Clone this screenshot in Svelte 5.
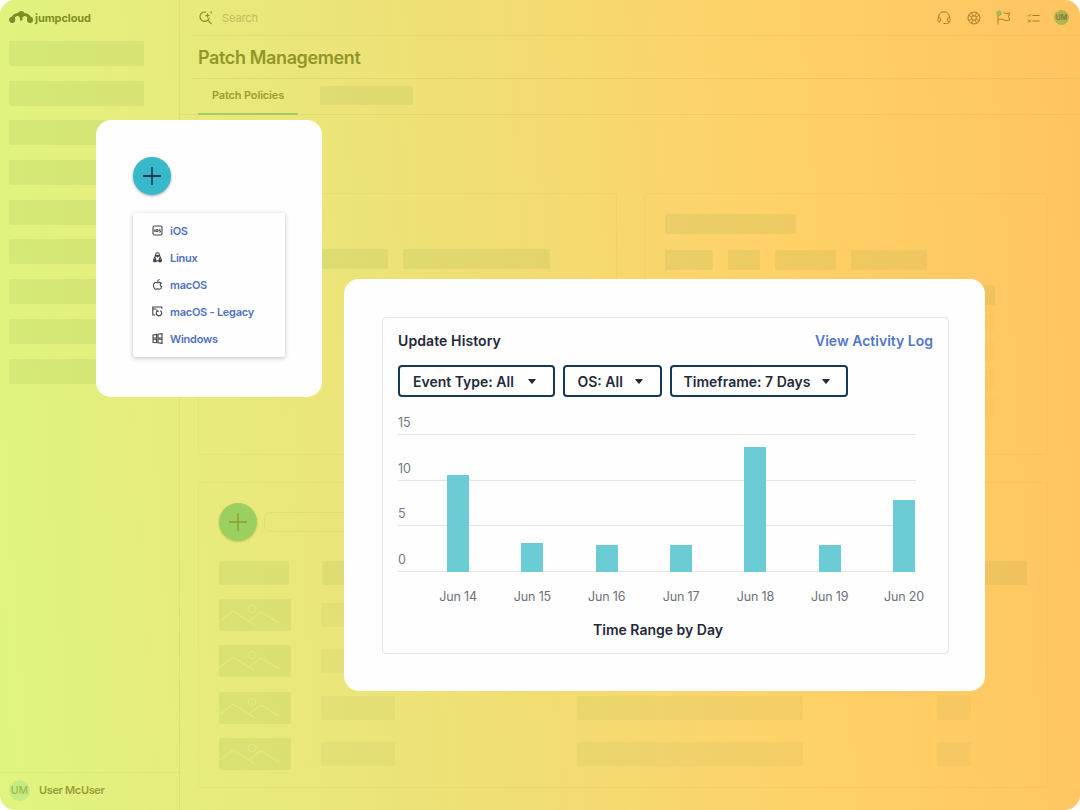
<script lang="ts">
	interface Bar {
		label: string;
		value: number;
	}

	const UNIT = 9.14;

	const bars: Bar[] = [
		{ label: 'Jun 14', value: 10.6 },
		{ label: 'Jun 15', value: 3.2 },
		{ label: 'Jun 16', value: 3 },
		{ label: 'Jun 17', value: 3 },
		{ label: 'Jun 18', value: 13.65 },
		{ label: 'Jun 19', value: 3 },
		{ label: 'Jun 20', value: 7.85 }
	];

	const ticks = [15, 10, 5, 0];
	const filters = [
		{ text: 'Event Type: All', size: 'wide' },
		{ text: 'OS: All', size: 'small' },
		{ text: 'Timeframe: 7 Days', size: 'large' }
	];
	const systems = ['iOS', 'Linux', 'macOS', 'macOS - Legacy', 'Windows'];
	const navItems = Array(9).fill(0);
	const rows = Array(4).fill(0);
	const updates = Array(4).fill(0);
</script>

{#snippet plus()}
	<svg width="18" height="18" viewBox="0 0 18 18" fill="none" stroke="currentColor" stroke-width="1.3">
		<path d="M9 0v18M0 9h18" />
	</svg>
{/snippet}

<div class="app">
	<aside class="sidebar">
		<div class="logo">
			<svg width="25" height="13" viewBox="0 0 25 13" fill="currentColor">
				<circle cx="3.2" cy="8.8" r="3.1" />
				<circle cx="21" cy="8.8" r="3.1" />
				<circle cx="12.200" cy="3.200" r="3.200" />
				<path d="M10.900 4h2.500v5.500h-2.500z" />
				<path d="M3 8.500C4.500 4.800 6.500 3.500 9 3.500h6.500c2.500 0 4.500 1.500 5.500 5" fill="none" stroke="currentColor" stroke-width="3.200" />
			</svg>
			<span>jumpcloud</span>
		</div>
		<nav>
			{#each navItems as _}
				<div class="block"></div>
			{/each}
		</nav>
		<footer>
			<span class="user-badge">UM</span>
			<span class="user-name">User McUser</span>
		</footer>
	</aside>

	<main>
		<header class="topbar">
			<svg width="14" height="14" viewBox="0 0 14 14" fill="none" stroke="currentColor" stroke-width="1.2">
				<path d="M7 1.200A4.700 4.700 0 1 0 10.300 6.500M9 9.300l3.700 3.700" />
				<path d="M8.500 1.700L9.300 3.700l2 .8-2 .8-.8 2-.8-2-2-.8 2-.8z" fill="currentColor" stroke="none" />
				<circle cx="12.300" cy="1.400" r=".9" fill="currentColor" stroke="none" />
			</svg>
			<span class="search-text">Search</span>
			<div class="tools">
				<svg width="14" height="14" viewBox="0 0 14 14" fill="none" stroke="currentColor" stroke-width="1">
					<path d="M1.500 7V6a5.500 5.200 0 0 1 11 0v1M12.500 10c0 1.500-1 2.300-3 2.500M6.500 12.500h2.500" />
					<rect x="1" y="6.500" width="2.500" height="4.500" rx="1.200" />
					<rect x="10.500" y="6.500" width="2.500" height="4.500" rx="1.200" />
				</svg>
				<svg width="14" height="14" viewBox="0 0 14 14" fill="none" stroke="currentColor" stroke-width="1">
					<circle cx="7" cy="7" r="6" />
					<circle cx="7" cy="7" r="2.300" />
					<path d="M4.300 1.700L6 4.900M9.700 1.700L8 4.900M4.300 12.300L6 9.100M9.700 12.300L8 9.100M1.700 4.300L4.900 6M1.700 9.700L4.900 8M12.300 4.300L9.100 6M12.300 9.700L9.100 8" />
				</svg>
				<svg class="flag" width="16" height="15" viewBox="0 0 16 15" fill="none" stroke="currentColor" stroke-width="1">
					<path d="M2 4v10.500M2 10c3-1.500 4.500-.8 6 0s3 .8 5.800 0L12.500 6.500l1.200-3.600c-2 .8-4 .8-6-.2" />
					<circle class="dot" cx="3" cy="3.200" r="2.700" />
				</svg>
				<svg width="13" height="12" viewBox="0 0 13 12" fill="none" stroke="currentColor" stroke-width="1">
					<path d="M5.500 3.500h7M5.500 9h7M.8 3.200l1.200 1.200L4.200 2M1 7.600l2.800 2.800M3.800 7.600L1 10.400" />
				</svg>
				<span class="avatar">UM</span>
			</div>
		</header>

		<div class="title">Patch Management</div>

		<div class="tabs">
			<div class="tab">Patch Policies</div>
			<div class="block tab-block"></div>
		</div>

		<div class="content">
			<div class="panels">
				<section class="panel first">
					<div class="line">
						<div class="block w-lead"></div>
						<div class="block w-147"></div>
					</div>
				</section>
				<section class="panel second">
					<div class="block w-131"></div>
					<div class="line">
						<div class="block w-48"></div>
						<div class="block w-32"></div>
						<div class="block w-61"></div>
						<div class="block w-76"></div>
					</div>
					<div class="updates">
						<div class="block"></div>
						{#each updates as _}
							<div class="block faint"></div>
						{/each}
					</div>
				</section>
			</div>

			<section class="panel list">
				<div class="list-head">
					<div class="round dim">{@render plus()}</div>
					<div class="search-box"></div>
				</div>
				<div class="row heading">
					<div class="block"></div>
					<div class="block"></div>
					<div class="block"></div>
					<div class="block"></div>
				</div>
				{#each rows as _}
					<div class="row">
						<div class="block thumb">
							<svg width="72" height="32" viewBox="0 0 72 32" fill="none" stroke="currentColor" stroke-width="1.300">
								<path d="M1 22L14 12l22 14M30 22l10-8q2-1 4 0l16 10" />
								<circle cx="33" cy="10" r="3.700" />
							</svg>
						</div>
						<div class="block faint"></div>
						<div class="block faint"></div>
						<div class="block faint"></div>
					</div>
				{/each}
			</section>
		</div>
	</main>

	<div class="float menu-card">
		<div class="round">{@render plus()}</div>
		<ul class="menu">
			{#each systems as name}
				<li>
					<svg width="11" height="11" viewBox="0 0 11 11" fill="none" stroke="currentColor" stroke-width="1.1">
						{#if name === 'iOS'}
							<rect x="1" y="1" width="9" height="9" rx="1.500" />
							<path d="M2.800 4.200v2.800" />
							<circle cx="5" cy="5.600" r="1.100" />
							<path d="M8.500 4.300H7.200v1.300h1.300V7H7" stroke-width=".8" />
						{:else if name === 'Linux'}
							<path d="M3.700 2.500C3.700.2 7.300.2 7.300 2.500c0 2 2.200 3.500 2.200 6L8 10 6.600 8.800H4.400L3 10 1.500 8.500c0-2.500 2.200-4 2.200-6z" />
							<path d="M4 3.500h3L5.500 5zM3.500 6.500L2 9.500h2zM7.500 6.500L9 9.500H7z" fill="currentColor" />
						{:else if name === 'macOS'}
							<path d="M5.500 3.700C3.500 2.700 1.500 3.800 1.500 6.300c0 2.200 1.300 4 2.500 4 .7 0 1-.4 1.700-.4s1 .4 1.700.4c1 0 2-1.300 2.300-2.600-1.900-.9-1.900-2.700-.5-3.500C8 3 6.800 3.200 5.500 3.700zM5.600 2.800C5.600 1.500 6.300.7 7.500.5" />
						{:else if name === 'macOS - Legacy'}
							<path d="M3.300 9H.8V1h9v1.800M.8 3h3.500" />
							<path d="M4.900 5.300V3.400M4.900 5.300h2M5 5.300A2.700 2.700 0 1 0 8.300 4.800" />
						{:else}
							<path d="M1 2l3.600-.5v3.500H1zM6 1.300l4-.6V5H6zM1 6.200h3.600v3.500L1 9.200zM6 6.200h4v4.200l-4-.6z" />
						{/if}
					</svg>
					<span>{name}</span>
				</li>
			{/each}
		</ul>
	</div>

	<div class="float history-card">
		<section class="history">
			<div class="history-head">
				<span class="history-title">Update History</span>
				<span class="link">View Activity Log</span>
			</div>
			<div class="filters">
				{#each filters as f}
					<button class={f.size}>
						{f.text}
						<svg width="8" height="5" viewBox="0 0 8 5" fill="currentColor"><path d="M.7 0h6.600q.8 0 .3.700L4.500 4.600q-.5.500-1 0L.4.700Q-.1 0 .7 0z" /></svg>
					</button>
				{/each}
			</div>
			<div class="chart">
				<div class="grid">
					{#each ticks as tick}
						<div class="tick">{tick}</div>
					{/each}
				</div>
				<div class="bars">
					{#each bars as bar}
						<div class="bar" style="height: {bar.value * UNIT}px"></div>
					{/each}
				</div>
			</div>
			<div class="labels">
				{#each bars as bar}
					<span>{bar.label}</span>
				{/each}
			</div>
			<div class="axis-title">Time Range by Day</div>
		</section>
	</div>
</div>

<style>
	:global(body) {
		background: #fff;
	}

	.app {
		--olive: #92962a;
		--line: rgba(130, 140, 40, 0.1);
		position: relative;
		display: flex;
		width: 1080px;
		height: 810px;
		overflow: hidden;
		border-radius: 15px;
		background: linear-gradient(86deg, #dff580 0%, #e5ee7c 14%, #ebe57a 32%, #f1dd72 48%, #f9d66d 61%, #ffd167 73%, #ffc862 91%, #ffc460 100%);
		font-family: Inter, 'Liberation Sans', sans-serif;
	}

	.app * {
		box-sizing: border-box;
	}

	svg {
		display: block;
		flex: none;
	}

	.block {
		background: rgba(100, 150, 60, 0.1);
		border-radius: 2px;
	}

	.block.faint {
		background: rgba(110, 140, 60, 0.06);
	}

	.sidebar {
		display: flex;
		flex-direction: column;
		width: 180px;
		border-right: 1px solid var(--line);
	}

	.logo {
		display: flex;
		align-items: center;
		gap: 1px;
		height: 36px;
		padding-left: 9px;
		color: #7f8d25;
		font-size: 11px;
		font-weight: 700;
		letter-spacing: -0.1px;
	}

	.logo svg {
		margin-bottom: 2px;
	}

	nav {
		display: flex;
		flex-direction: column;
		gap: 14.7px;
		flex: 1;
		padding: 5px 35px 0 9px;
	}

	nav .block {
		height: 25px;
	}

	footer {
		display: flex;
		align-items: center;
		gap: 9px;
		height: 38px;
		padding: 0 9px 3px;
		border-top: 1px solid var(--line);
	}

	.user-badge {
		width: 21px;
		height: 21px;
		border-radius: 50%;
		background: #c4ec82;
		color: #9dba4c;
		font-size: 10.5px;
		font-weight: 500;
		line-height: 21px;
		text-align: center;
	}

	.user-name {
		color: #989d38;
		font-size: 11px;
		font-weight: 600;
		letter-spacing: -0.35px;
	}

	main {
		flex: 1;
		min-width: 0;
	}

	.topbar {
		display: flex;
		align-items: center;
		height: 36px;
		margin-left: 12px;
		padding: 0 11px 0 7px;
		border-bottom: 1px solid var(--line);
		color: #968c2c;
	}

	.search-text {
		margin-left: 9px;
		color: #bfbc5f;
		font-size: 11px;
		letter-spacing: -0.1px;
	}

	.tools {
		display: flex;
		align-items: center;
		gap: 16px;
		margin-left: auto;
		color: #a97c24;
	}

	.flag {
		margin: -1px -1px 0 -1px;
	}

	.dot {
		fill: #a3b754;
		stroke: none;
	}

	.avatar {
		width: 15px;
		height: 15px;
		margin-left: -2px;
		border-radius: 50%;
		background: #b0b452;
		color: #81792b;
		font-size: 7px;
		font-weight: 600;
		line-height: 15px;
		text-align: center;
	}

	.title {
		height: 43px;
		margin-left: 12px;
		padding-left: 6px;
		border-bottom: 1px solid var(--line);
		color: var(--olive);
		font-size: 18px;
		font-weight: 600;
		letter-spacing: -0.37px;
		line-height: 43px;
	}

	.tabs {
		display: flex;
		align-items: center;
		height: 36px;
		padding-left: 18px;
		border-bottom: 1px solid var(--line);
	}

	.tab {
		width: 100px;
		height: 36px;
		border-bottom: 2px solid #a3cc60;
		color: #9b9d35;
		font-size: 11px;
		font-weight: 600;
		letter-spacing: -0.15px;
		line-height: 33px;
		text-align: center;
	}

	.tab-block {
		width: 93px;
		height: 19px;
		margin: 0 0 2px 22px;
	}

	.content {
		padding: 78px 32px 0 18px;
	}

	.panels {
		display: flex;
		gap: 27px;
		height: 262px;
	}

	.panel {
		border: 1px solid rgba(150, 140, 40, 0.06);
		border-radius: 3px;
	}

	.first {
		width: 419px;
		padding: 55px 20px;
	}

	.second {
		flex: 1;
		padding: 20px 20px 0;
	}

	.line {
		display: flex;
		gap: 15px;
	}

	.line .block {
		height: 20px;
	}

	.second .line {
		margin-top: 16px;
	}

	.w-lead {
		width: 169px;
	}

	.w-147 {
		width: 147px;
	}

	.w-131 {
		width: 131px;
		height: 20px;
	}

	.w-48 {
		width: 48px;
	}

	.w-32 {
		width: 32px;
	}

	.w-61 {
		width: 61px;
	}

	.w-76 {
		width: 76px;
	}

	.updates {
		display: grid;
		gap: 8px;
		width: 330px;
		margin-top: 15px;
	}

	.updates .block {
		height: 20px;
	}

	.updates .faint {
		opacity: 0.4;
	}

	.list {
		height: 306px;
		margin-top: 27px;
		padding: 20px;
	}

	.list-head {
		display: flex;
		align-items: center;
		gap: 7px;
		height: 38px;
	}

	.search-box {
		width: 220px;
		height: 20px;
		border: 1px solid var(--line);
		border-radius: 7px;
	}

	.row {
		display: flex;
		align-items: center;
		height: 32px;
		margin-bottom: 14.4px;
	}

	.row .block {
		height: 24px;
	}

	.row .block:nth-child(1) {
		width: 72px;
		margin-right: 30px;
	}

	.row .block:nth-child(2) {
		width: 74px;
		margin-right: 182px;
	}

	.row .block:nth-child(3) {
		width: 226px;
		margin-right: 134px;
	}

	.row .block:nth-child(4) {
		width: 34px;
	}

	.row .thumb {
		height: 32px;
		color: #e6e780;
	}

	.row.heading {
		height: 24px;
		margin: 20px 0 14px;
	}

	.row.heading .block:nth-child(1) {
		width: 70px;
		margin-right: 33px;
	}

	.row.heading .block:nth-child(4) {
		width: 91px;
	}

	.float {
		position: absolute;
		background: #fefefe;
		border-radius: 15px;
	}

	.round {
		display: grid;
		place-items: center;
		width: 38px;
		height: 38px;
		border-radius: 50%;
		background: #36b9c8;
		color: #14172b;
		box-shadow: 0 1px 3px rgba(20, 30, 60, 0.4);
	}

	.round.dim {
		background: #9bd061;
		color: #8b9a2d;
		box-shadow: 0 1px 2px rgba(120, 130, 30, 0.35);
	}

	.menu-card {
		left: 96px;
		top: 119.5px;
		width: 226px;
		height: 277.5px;
		padding: 37px;
	}

	.menu {
		width: 152px;
		height: 144px;
		margin: 18.5px 0 0;
		padding: 4px 0 0 19px;
		list-style: none;
		border-radius: 2px;
		box-shadow: 0 1px 4px rgba(40, 30, 90, 0.3);
	}

	.menu li {
		display: flex;
		align-items: center;
		gap: 7px;
		height: 27px;
		color: #4f73bf;
		font-size: 11px;
		font-weight: 600;
		letter-spacing: -0.25px;
	}

	.menu svg {
		color: #41434f;
	}

	.history-card {
		left: 344px;
		top: 279px;
		width: 641px;
		height: 412px;
		padding: 38px 36px 38px 38px;
	}

	.history {
		height: 337px;
		padding: 0 15px;
		border: 1px solid #e5e4e9;
		border-radius: 4px;
	}

	.history-head {
		display: flex;
		justify-content: space-between;
		height: 47px;
		font-size: 14px;
		font-weight: 600;
		line-height: 46px;
	}

	.history-title,
	.axis-title {
		color: #25283a;
	}

	.history-title {
		letter-spacing: 0.1px;
	}

	.link {
		color: #5277c6;
	}

	.filters {
		display: flex;
		gap: 8px;
	}

	button {
		display: flex;
		align-items: center;
		justify-content: space-between;
		height: 32px;
		padding: 0 17px 0 13px;
		background: #fff;
		border: 2px solid #173858;
		border-radius: 4px;
		color: #252a3b;
		font: 600 14px Inter, 'Liberation Sans', sans-serif;
		white-space: nowrap;
	}

	.wide {
		width: 156.5px;
	}

	.small {
		width: 99px;
	}

	.large {
		width: 178.5px;
		padding: 0 16px 0 12px;
	}

	.chart {
		position: relative;
		height: 175px;
	}

	.grid {
		width: 518px;
	}

	.tick {
		display: flex;
		align-items: flex-end;
		height: 45.7px;
		padding-bottom: 4px;
		border-bottom: 1px solid #e5e5e9;
		color: #747681;
		font-size: 12.5px;
		line-height: 15px;
	}

	.tick:first-child {
		height: 38px;
	}

	.bars,
	.labels {
		display: grid;
		grid-template-columns: repeat(7, 74.3px);
		justify-items: center;
	}

	.bars {
		position: absolute;
		left: 23px;
		bottom: 0;
		align-items: end;
	}

	.bar {
		width: 22px;
		background: #6bccd5;
	}

	.labels {
		margin: 17px -10px 0 23px;
		color: #6d707c;
		font-size: 12.5px;
		letter-spacing: -0.15px;
		line-height: 16px;
	}

	.axis-title {
		margin-top: 16px;
		padding-right: 15px;
		font-size: 14px;
		font-weight: 600;
		line-height: 17px;
		text-align: center;
	}
</style>
